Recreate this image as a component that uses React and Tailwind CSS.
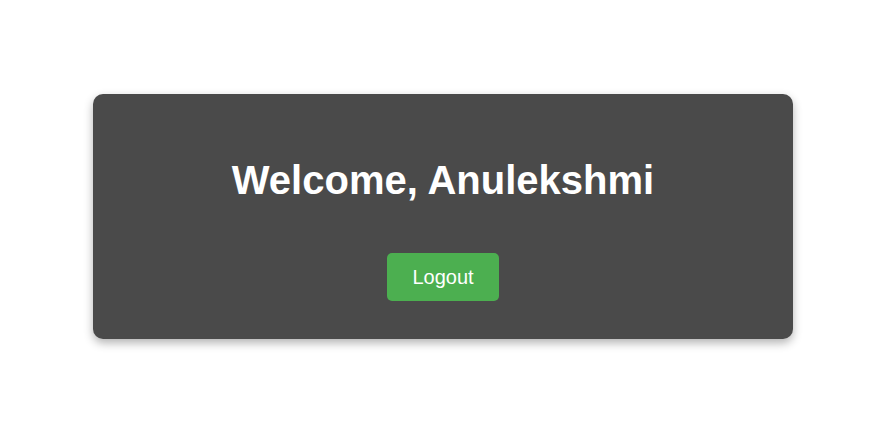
export default function App() {
  return (
    <div className="w-[880px] h-[440px] bg-white flex justify-center pl-[6px] pt-[94px]" style={{ fontFamily: '"Liberation Sans", Arial, sans-serif' }}>
      <div className="w-[700px] h-[245px] bg-[#4a4a4a] rounded-[10px] shadow-[0_4px_10px_rgba(0,0,0,0.3)] flex flex-col items-center pt-[63px]">
        <h1 className="text-white font-bold text-[40px] leading-[46px]">Welcome, Anulekshmi</h1>
        <button className="mt-[50px] w-[112px] h-[48px] bg-[#4caf50] text-white text-[20px] rounded-[5px]">Logout</button>
      </div>
    </div>
  );
}
